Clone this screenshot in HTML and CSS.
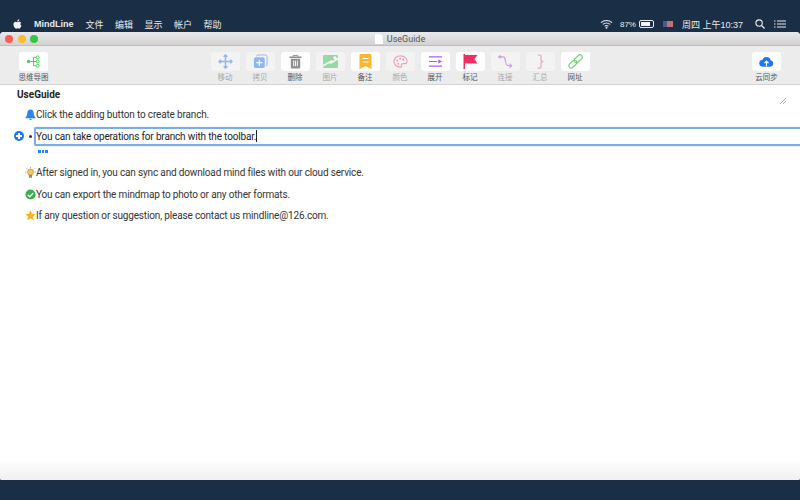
FILE: index.html
```html
<!DOCTYPE html>
<html lang="en">
<head>
    <meta charset="UTF-8">
    <title>MindLine - UseGuide</title>
    <link rel="stylesheet" href="styles.css">
</head>
<body>
    <div class="menubar">
        <svg class="apple" viewBox="0 0 12 14"><path d="M8.4 0c.1 1-.3 1.800-.8 2.400-.5.600-1.300 1-2 1-.1-.9.300-1.800.8-2.400C6.900.4 7.800 0 8.400 0zM10.900 4.800c-1.500.9-1.300 3.200.4 4-.5 1.300-1.700 3.700-3 3.700-.8 0-1.200-.5-2.100-.5s-1.400.5-2.100.5C2.600 12.500.6 9.400.6 6.900c0-2.300 1.500-3.500 2.900-3.500.9 0 1.700.6 2.200.6s1.400-.7 2.500-.6c.5 0 1.800.2 2.700 1.400z"/></svg>
        <span class="app-name">MindLine</span>
        <span class="menu-item">文件</span>
        <span class="menu-item">编辑</span>
        <span class="menu-item">显示</span>
        <span class="menu-item">帐户</span>
        <span class="menu-item">帮助</span>
        <div class="status-items">
            <svg class="wifi" viewBox="0 0 14 10"><path d="M1 3.500C4.500.4 9.500.4 13 3.500M3 5.500c2.400-2 5.600-2 8 0M5 7.400c1.200-.9 2.800-.9 4 0" fill="none" stroke="#e8ecf0" stroke-width="1.100"/><circle cx="7" cy="9" r="1" fill="#e8ecf0"/></svg>
            <span class="battery-pct">87%</span>
            <div class="battery"><div class="battery-fill"></div></div>
            <div class="flag"></div>
            <span class="clock">周四 上午10:37</span>
            <svg class="search" viewBox="0 0 11 11"><circle cx="4.500" cy="4.500" r="3.500" fill="none" stroke="#e8ecf0" stroke-width="1.200"/><path d="M7 7l3.500 3.500" stroke="#e8ecf0" stroke-width="1.400"/></svg>
            <svg class="list" viewBox="0 0 12 8"><path d="M3 1h9M3 4h9M3 7h9" stroke="#e8ecf0" stroke-width="1.200"/><path d="M0 1h1.500M0 4h1.500M0 7h1.500" stroke="#e8ecf0" stroke-width="1.200"/></svg>
        </div>
    </div>

    <div class="window">
        <div class="titlebar">
            <div class="lights">
                <span class="light red"></span>
                <span class="light yellow"></span>
                <span class="light green"></span>
            </div>
            <svg class="doc-icon" viewBox="0 0 8 10"><path d="M0 0h5.500L8 2.500V10H0z" fill="#fff"/></svg>
            <span>UseGuide</span>
        </div>

        <div class="toolbar">
            <div class="tool first">
                <div class="tool-btn"><svg viewBox="0 0 18 16"><circle cx="3" cy="8" r="2" fill="#4fc95c"/><path d="M3 8h6M9 3v10M9 3h3M9 8h3M9 13h3" fill="none" stroke="#4fc95c" stroke-width="1.200"/><circle cx="14" cy="3" r="1.800" fill="none" stroke="#4fc95c" stroke-width="1.100"/><circle cx="14" cy="8" r="1.800" fill="none" stroke="#4fc95c" stroke-width="1.100"/><circle cx="14" cy="13" r="1.800" fill="none" stroke="#4fc95c" stroke-width="1.100"/></svg></div>
                <span class="tool-label">思维导图</span>
            </div>
            <div class="tool off">
                <div class="tool-btn"><svg viewBox="0 0 16 16"><path d="M8 1v14M1 8h14M6 3l2-2 2 2M6 13l2 2 2-2M3 6L1 8l2 2M13 6l2 2-2 2" fill="none" stroke="#2b7df0" stroke-width="1.500"/></svg></div>
                <span class="tool-label">移动</span>
            </div>
            <div class="tool off">
                <div class="tool-btn"><svg viewBox="0 0 16 16"><path d="M4 2.500Q4 1 5.500 1H13q2 0 2 2v8q0 1.500-1.500 1.500" fill="none" stroke="#2b7df0" stroke-width="1"/><rect x="1" y="3.500" width="11.500" height="11.500" rx="2" fill="#2b7df0"/><path d="M6.750 6v6.500M3.500 9.250H10" stroke="#fff" stroke-width="1.300"/></svg></div>
                <span class="tool-label">拷贝</span>
            </div>
            <div class="tool">
                <div class="tool-btn"><svg viewBox="0 0 16 16"><path d="M1.500 3.500h13" stroke="#8f8f8f" stroke-width="1.500"/><path d="M5.500 3V1.500h5V3" fill="none" stroke="#8f8f8f"/><path d="M3 5h10v9q0 1.500-1.500 1.500h-7Q3 15.500 3 14z" fill="#8f8f8f"/><path d="M6 7v6M8 7v6M10 7v6" stroke="#fff"/></svg></div>
                <span class="tool-label">删除</span>
            </div>
            <div class="tool off">
                <div class="tool-btn"><svg viewBox="0 0 16 14"><rect width="16" height="14" rx="1.500" fill="#3fbf55"/><path d="M0 10.500L9 5.500c2 1 4-.5 5-2.500h2v2l-7 4.500-3-.5-6 3.500z" fill="#fff" opacity=".9"/><circle cx="12.500" cy="3" r="1.500" fill="#fff"/></svg></div>
                <span class="tool-label">图片</span>
            </div>
            <div class="tool">
                <div class="tool-btn"><svg viewBox="0 0 12 15"><path d="M0 1.500Q0 0 1.500 0h9Q12 0 12 1.500V15L6 12 0 15z" fill="#fbb62d"/><path d="M3 4.500h6M3 8h6" stroke="#fff" stroke-width="1.200"/></svg></div>
                <span class="tool-label">备注</span>
            </div>
            <div class="tool off">
                <div class="tool-btn"><svg viewBox="0 0 16 14"><path d="M8 1C4 1 1 3.500 1 7c0 3.500 3 6 7 6 1.500 0 1.500-1 1-2-.4-1 .3-1.800 1.500-1.800H13c1.300 0 2-1 2-2.400C15 3.200 12 1 8 1z" fill="none" stroke="#ec4f74" stroke-width="1.200"/><circle cx="4.500" cy="6" r="1.100" fill="#ec4f74"/><circle cx="7.500" cy="4" r="1.100" fill="#ec4f74"/><circle cx="11" cy="5" r="1.100" fill="#ec4f74"/><circle cx="5.500" cy="9.500" r="1.100" fill="#ec4f74"/></svg></div>
                <span class="tool-label">颜色</span>
            </div>
            <div class="tool">
                <div class="tool-btn"><svg viewBox="0 0 16 12"><path d="M1 1h14M1 6h9M1 11h14" stroke="#b45cf0" stroke-width="1.300"/><path d="M11 3.500L15 6l-4 2.500z" fill="#b45cf0"/></svg></div>
                <span class="tool-label">展开</span>
            </div>
            <div class="tool">
                <div class="tool-btn"><svg viewBox="0 0 14 15"><path d="M0 0h1.500v15H0z" fill="#ee2f66"/><path d="M1.500 1H14l-3 4 3 4.500H1.500z" fill="#ee2f66"/></svg></div>
                <span class="tool-label">标记</span>
            </div>
            <div class="tool off">
                <div class="tool-btn"><svg viewBox="0 0 16 15"><circle cx="2" cy="2.500" r="1.800" fill="#a64ee8"/><path d="M3 2.500h2.500c2 0 2 2 2.500 5s1 4.500 3.500 4.500H14" fill="none" stroke="#a64ee8" stroke-width="1.300"/><path d="M12.500 9l3 3-3 3z" fill="#a64ee8"/></svg></div>
                <span class="tool-label">连接</span>
            </div>
            <div class="tool off">
                <div class="tool-btn"><svg viewBox="0 0 10 16"><path d="M2 1h2q1.500 0 1.500 1.500v3.500c0 1 1 2 2.500 2-1.500 0-2.500 1-2.500 2v3.500Q5.500 15 4 15H2" fill="none" stroke="#ec4f74" stroke-width="1.200"/></svg></div>
                <span class="tool-label">汇总</span>
            </div>
            <div class="tool">
                <div class="tool-btn"><svg viewBox="0 0 16 16"><g fill="none" stroke="#63d06f" stroke-width="1.200" transform="rotate(-45 8 8)"><rect x="-1" y="5.500" width="10" height="5" rx="2.500"/><rect x="7" y="5.500" width="10" height="5" rx="2.500"/></g></svg></div>
                <span class="tool-label">网址</span>
            </div>
            <div class="tool last">
                <div class="tool-btn"><svg viewBox="0 0 16 12"><path d="M4 11.500a3.500 3.500 0 0 1-.5-7A4.700 4.700 0 0 1 12.500 4.600 3.500 3.500 0 0 1 12 11.500z" fill="#1d76f2"/><path d="M8 11V6M5.800 7.800L8 5.500l2.200 2.300" fill="none" stroke="#fff" stroke-width="1.300"/></svg></div>
                <span class="tool-label">云同步</span>
            </div>
        </div>

        <div class="editor">
            <svg class="resize" viewBox="0 0 6 6"><path d="M0 6l6-6M3 6l3-3" stroke="#999" stroke-width=".8"/></svg>
            <div class="doc-title">UseGuide</div>

            <div class="row">
                <svg class="icon" viewBox="0 0 12 12"><path d="M6 .5C3.500.5 2.500 2.500 2.500 4.500c0 2.500-1 3.500-2 4.500v1h11V9c-1-1-2-2-2-4.500C9.500 2.500 8.500.5 6 .5z" fill="#2a85f0"/><path d="M4.500 10.500a1.500 1.500 0 0 0 3 0z" fill="#2a85f0"/></svg>
                <span>Click the adding button to create branch.</span>
            </div>

            <div class="row current">
                <div class="add-btn"></div>
                <span class="dot"></span>
                <div class="edit-box">You can take operations for branch with the toolbar.<span class="caret"></span></div>
                <div class="more">
                    <i></i><i></i><i></i>
                </div>
            </div>

            <div class="row">
                <svg class="icon" viewBox="0 0 12 12"><g stroke="#777" stroke-width=".7"><path d="M6 0v1.400M1.500 1.200l1.100 1.100M10.500 1.200L9.400 2.300M0 5.500h1.400M10.600 5.500H12"/></g><circle cx="6" cy="5.500" r="3.300" fill="#f6c75a" stroke="#a08040" stroke-width=".6"/><rect x="4.300" y="8.500" width="3.400" height="3.200" rx=".6" fill="#8a8a8a"/></svg>
                <span>After signed in, you can sync and download mind files with our cloud service.</span>
            </div>
            <div class="row">
                <svg class="icon" viewBox="0 0 12 12"><circle cx="6" cy="6" r="5.500" fill="#36b04a"/><path d="M3 6.200l2.200 2.200L9 4.300" fill="none" stroke="#fff" stroke-width="1.400"/></svg>
                <span>You can export the mindmap to photo or any other formats.</span>
            </div>
            <div class="row">
                <svg class="icon" viewBox="0 0 12 12"><path d="M6 .3l1.700 3.700 4 .5-3 2.700.8 4L6 9.300 2.500 11.200l.8-4-3-2.700 4-.5z" fill="#fbb31f"/></svg>
                <span>If any question or suggestion, please contact us mindline@126.com.</span>
            </div>
        </div>
    </div>
</body>
</html>
```

FILE: styles.css
```css
* { margin: 0; padding: 0; box-sizing: border-box; }

body {
    width: 800px;
    height: 500px;
    overflow: hidden;
    background: #1a2f45;
    font-family: "Liberation Sans", "Noto Sans CJK SC", sans-serif;
    display: flex;
    flex-direction: column;
    padding-top: 16px;
    padding-bottom: 20px;
}

.menubar {
    height: 16px;
    display: flex;
    align-items: center;
    color: #e8ecf0;
    font-size: 9px;
    padding-left: 13px;
}

.apple {
    width: 9px;
    height: 11px;
    fill: #f0f2f4;
    margin-right: 12px;
}

.app-name {
    font-weight: bold;
    margin-right: 12px;
}

.menu-item {
    margin-right: 11.5px;
}

.status-items {
    margin-left: auto;
    display: flex;
    align-items: center;
    padding-right: 14px;
}

.wifi { width: 13px; height: 10px; margin-right: 7px; }
.battery-pct { font-size: 8px; margin-right: 3px; }

.battery {
    width: 15px;
    height: 8px;
    border: 1px solid #e8ecf0;
    border-radius: 2px;
    padding: 1px;
    margin-right: 9px;
}

.battery-fill {
    width: 85%;
    height: 100%;
    background: #f4f6f8;
}

.flag {
    width: 10px;
    height: 6px;
    background: linear-gradient(90deg, #4a5a90 40%, #c4707a 40%);
    margin-right: 9px;
}

.clock { margin-right: 12px; }
.search { width: 10px; height: 10px; margin-right: 9px; }
.list { width: 12px; height: 8px; }

.window {
    flex: 1;
    background: #fff;
    border-radius: 4px 4px 2px 2px;
    display: flex;
    flex-direction: column;
    overflow: hidden;
}

.titlebar {
    height: 14px;
    flex: none;
    background: linear-gradient(#e9e9e9, #d2d2d2);
    border-bottom: 1px solid #bdbdbd;
    display: flex;
    align-items: center;
    justify-content: center;
    position: relative;
    font-family: Roboto, sans-serif;
    font-size: 9px;
    color: #555;
}

.lights {
    position: absolute;
    left: 5px;
    top: 3px;
    display: flex;
    gap: 4.5px;
}

.light {
    width: 8px;
    height: 8px;
    border-radius: 50%;
}

.red { background: #fc5b57; }
.yellow { background: #fdbb2e; }
.green { background: #33c748; }

.doc-icon {
    width: 8px;
    height: 10px;
    margin-right: 4px;
}

.toolbar {
    height: 39px;
    flex: none;
    background: #ececec;
    border-bottom: 1px solid #d4d4d4;
    display: flex;
    padding: 6px 16px 0;
}

.tool {
    width: 35px;
    display: flex;
    flex-direction: column;
    align-items: center;
    font-size: 7.5px;
    color: #555;
}

.first { margin-right: 156.5px; }
.last { margin-left: auto; }

.tool-btn {
    width: 29px;
    height: 19px;
    background: #fff;
    border-radius: 3px;
    display: flex;
    align-items: center;
    justify-content: center;
    margin-bottom: 2px;
}

.tool-btn svg {
    width: 15px;
    height: 15px;
}

.tool-label {
    line-height: 10px;
    white-space: nowrap;
}

.off .tool-btn { background: #f3f3f3; }
.off .tool-btn svg { opacity: 0.5; }
.off .tool-label { color: #a8a8a8; }

.editor {
    flex: 1;
    position: relative;
    background: linear-gradient(#fff 375px, #f0f0f0);
    padding-top: 3px;
    font-family: Roboto, "Liberation Sans", sans-serif;
    font-size: 10px;
    color: #333;
}

.resize {
    position: absolute;
    right: 14px;
    top: 13px;
    width: 6px;
    height: 6px;
}

.doc-title {
    font-weight: bold;
    padding-left: 17px;
    line-height: 13px;
    margin-bottom: 7px;
    color: #222;
}

.row {
    display: flex;
    align-items: center;
    height: 13px;
    margin-bottom: 8.5px;
    padding-left: 25px;
    position: relative;
    white-space: nowrap;
    letter-spacing: -0.16px;
}

.icon {
    width: 11px;
    height: 11px;
    flex: none;
}

.current {
    height: 19px;
    margin-top: -2.5px;
    margin-bottom: 20px;
    padding-left: 0;
}

.add-btn {
    position: absolute;
    left: 14px;
    top: 4px;
    width: 10px;
    height: 10px;
    border-radius: 50%;
    background: #1d76f2;
}

.add-btn::before,
.add-btn::after {
    content: "";
    position: absolute;
    background: #fff;
}

.add-btn::before { left: 2px; top: 4px; width: 6px; height: 2px; }
.add-btn::after { left: 4px; top: 2px; width: 2px; height: 6px; }

.dot {
    position: absolute;
    left: 29px;
    top: 8px;
    width: 3px;
    height: 3px;
    border-radius: 50%;
    background: #333;
}

.edit-box {
    flex: none;
    margin-left: 34px;
    width: 780px;
    height: 19px;
    line-height: 15px;
    border: 2px solid #7badec;
    border-radius: 2px;
    box-shadow: 0 0 1px #7badec;
    color: #222;
}

.caret {
    display: inline-block;
    width: 1px;
    height: 12px;
    background: #222;
    vertical-align: -2px;
}

.more {
    position: absolute;
    left: 38px;
    top: 23px;
    display: flex;
    gap: 1px;
}

.more i {
    width: 2.500px;
    height: 2.500px;
    background: #2a85f0;
}
```
